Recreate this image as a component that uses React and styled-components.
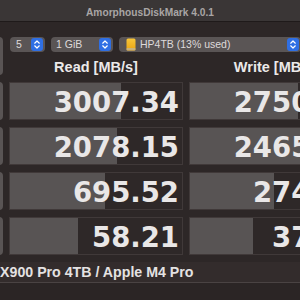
import React from 'react';
import styled, { createGlobalStyle } from 'styled-components';

const Global = createGlobalStyle`
  html, body { margin: 0; padding: 0; background: #2d2727; }
  body { width: 300px; height: 300px; overflow: hidden; font-family: "Liberation Sans", Arial, sans-serif; }
  #root { width: 300px; height: 300px; overflow: hidden; }
`;

const Screen = styled.div`
  width: 300px;
  height: 300px;
  overflow: hidden;
  display: flex;
  flex-direction: column;
  background: #2d2727;
`;

const TitleBar = styled.div`
  flex: none;
  height: 22px;
  box-sizing: border-box;
  padding-top: 3px;
  background: #3a3636;
  border-bottom: 1px solid #1f1a1a;
  text-align: center;
  font: bold 10.2px/19px "Liberation Sans", Arial, sans-serif;
  color: #a9a5a5;
  white-space: nowrap;
`;

const Body = styled.div`
  flex: none;
  margin-left: -80px;
  width: 480px;
  padding-top: 15px;
  display: grid;
  grid-template-columns: 83px 174px 174px;
  grid-template-rows: 15px 16px repeat(4, 38px);
  column-gap: 6px;
  row-gap: 7px;
`;

const SideButton = styled.div`
  grid-column: 1;
  grid-row: ${(p) => p.$row};
  background: #595454;
  border-radius: 4px;
`;

const SelectRow = styled.div`
  grid-column: 2 / span 2;
  grid-row: 1;
  display: flex;
  gap: 6px;
  padding-left: 1px;
`;

const Select = styled.div`
  flex: none;
  width: ${(p) => p.$w}px;
  height: 15px;
  box-sizing: border-box;
  display: flex;
  align-items: center;
  gap: 4px;
  padding: 0 2px 0 ${(p) => p.$pl}px;
  background: #5a5555;
  border-radius: 4px;
  font: 10.5px/15px "Liberation Sans", Arial, sans-serif;
  color: #dedada;
  white-space: nowrap;
`;

const SelectLabel = styled.span`
  flex: 1;
  overflow: hidden;
`;

const Header = styled.div`
  grid-row: 2;
  grid-column: ${(p) => p.$col};
  text-align: center;
  font: bold 14.5px/16px "Liberation Sans", Arial, sans-serif;
  color: #ebe9e9;
  white-space: nowrap;
`;

const Cell = styled.div`
  grid-row: ${(p) => p.$row};
  grid-column: ${(p) => p.$col};
  box-sizing: border-box;
  border: 1px solid #403939;
  background: linear-gradient(
    to right,
    #585454 0,
    #585454 ${(p) => p.$fill}px,
    #2e2828 ${(p) => p.$fill}px
  );
  display: flex;
  justify-content: flex-end;
  align-items: flex-start;
  padding: 2px 3px 0 0;
  font: bold 27.5px/34px "DejaVu Sans", Verdana, sans-serif;
  color: #e9e7e7;
  white-space: nowrap;
  overflow: hidden;
`;

const Footer = styled.div`
  flex: none;
  margin-top: 7px;
  height: 20px;
  background: #332c2c;
  border-bottom: 1px solid #4a4343;
  overflow: hidden;
`;

const FooterText = styled.div`
  margin-left: -32px;
  font: bold 14.2px/20px "Liberation Sans", Arial, sans-serif;
  color: #e4e2e2;
  white-space: nowrap;
`;

const Bottom = styled.div`
  flex: 1;
  background: #2b2525;
`;

const Stepper = () => (
  <svg width="12" height="13" viewBox="0 0 12 13" style={{ flex: 'none' }}>
    <rect x="0" y="0" width="12" height="13" rx="3" fill="#2f6fe4" />
    <path d="M3.7 5.2 L6 3 L8.3 5.2" fill="none" stroke="#fff" strokeWidth="1.2" strokeLinecap="round" strokeLinejoin="round" />
    <path d="M3.7 7.8 L6 10 L8.3 7.8" fill="none" stroke="#fff" strokeWidth="1.2" strokeLinecap="round" strokeLinejoin="round" />
  </svg>
);

const DriveIcon = () => (
  <svg width="10" height="13" viewBox="0 0 10 13" style={{ flex: 'none' }}>
    <defs>
      <linearGradient id="drv" x1="0" y1="0" x2="0" y2="1">
        <stop offset="0" stopColor="#f8c63a" />
        <stop offset="1" stopColor="#eaa512" />
      </linearGradient>
    </defs>
    <rect x="0.5" y="0.5" width="9" height="12" rx="1.5" fill="url(#drv)" />
    <rect x="0.5" y="10" width="9" height="2.5" rx="1" fill="#c9b27a" />
  </svg>
);

const rows = [
  { read: '3007.34', rf: 111, write: '2750.67', wf: 108 },
  { read: '2078.15', rf: 107, write: '2465.12', wf: 116 },
  { read: '695.52', rf: 95, write: '274.31', wf: 84 },
  { read: '58.21', rf: 68, write: '37.84', wf: 63 },
];

export default function App() {
  return (
    <Screen>
      <Global />
      <TitleBar>AmorphousDiskMark 4.0.1</TitleBar>
      <Body>
        <SideButton $row="1 / span 2" />
        <SelectRow>
          <Select $w={35} $pl={6}>
            <SelectLabel>5</SelectLabel>
            <Stepper />
          </Select>
          <Select $w={62} $pl={5}>
            <SelectLabel>1 GiB</SelectLabel>
            <Stepper />
          </Select>
          <Select $w={182} $pl={7}>
            <DriveIcon />
            <SelectLabel>HP4TB (13% used)</SelectLabel>
            <Stepper />
          </Select>
        </SelectRow>
        <Header $col={2}>Read [MB/s]</Header>
        <Header $col={3}>Write [MB/s]</Header>
        {rows.map((r, i) => (
          <React.Fragment key={i}>
            <SideButton $row={i + 3} />
            <Cell $row={i + 3} $col={2} $fill={r.rf}>{r.read}</Cell>
            <Cell $row={i + 3} $col={3} $fill={r.wf}>{r.write}</Cell>
          </React.Fragment>
        ))}
      </Body>
      <Footer>
        <FooterText>HP FX900 Pro 4TB / Apple M4 Pro</FooterText>
      </Footer>
      <Bottom />
    </Screen>
  );
}
